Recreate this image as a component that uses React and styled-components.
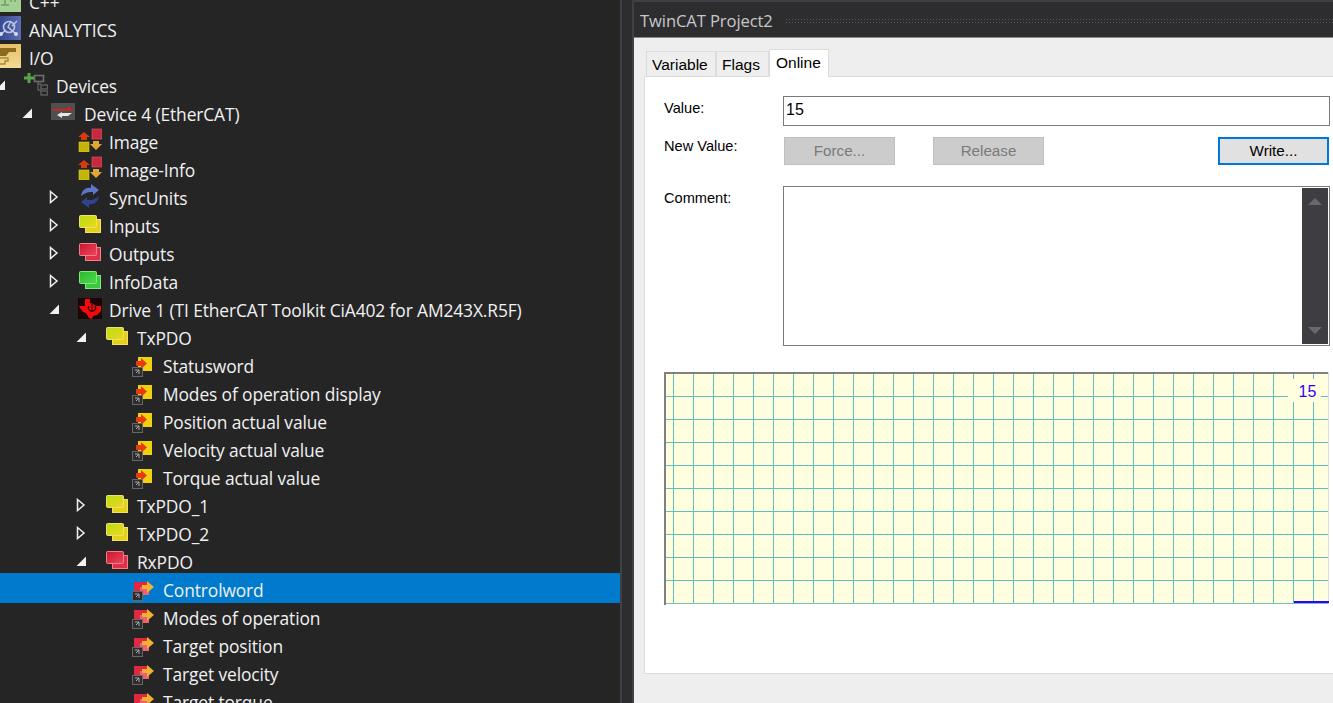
import React, { useId } from 'react'
import styled, { createGlobalStyle } from 'styled-components'

const GlobalStyle = createGlobalStyle`
  html, body {
    margin: 0;
    height: 100%;
    overflow: hidden;
    background: #252526;
  }
`

// icons

const CppIcon = () => (
  <svg width="24" height="24" viewBox="0 0 24 24">
    <rect width="24" height="24" fill="#a5d095" />
    <path d="M4 5h8M8 5v12M4 11h14M14 8v6M18 8v6M4 17h8" stroke="#6f9f66" strokeWidth="1.5" fill="none" />
  </svg>
)

const AnalyticsIcon = () => {
  const id = useId()
  return (
    <svg width="24" height="24" viewBox="0 0 24 24">
      <defs>
        <linearGradient id={id} x1="0" y1="0" x2="1" y2="0">
          <stop offset="0" stopColor="#35458c" />
          <stop offset="1" stopColor="#5a6cb4" />
        </linearGradient>
      </defs>
      <rect width="24" height="24" fill={`url(#${id})`} />
      <circle cx="12" cy="11" r="5.500" fill="none" stroke="#c0c8dc" strokeWidth="1.600" />
      <path d="M3 19l6-5M14 5l-3 6 9 8M20 5l-5 5" stroke="#c0c8dc" strokeWidth="1.400" fill="none" />
      <circle cx="4" cy="18" r="2" fill="#d5dae8" />
      <circle cx="19" cy="18" r="2" fill="#d5dae8" />
    </svg>
  )
}

const IoIcon = () => {
  const id = useId()
  return (
    <svg width="24" height="24" viewBox="0 0 24 24">
      <defs>
        <linearGradient id={id} x1="0" y1="0" x2="0" y2="1">
          <stop offset="0" stopColor="#e6c06a" />
          <stop offset="1" stopColor="#f2dc95" />
        </linearGradient>
      </defs>
      <rect width="24" height="24" fill={`url(#${id})`} />
      <path d="M1 4h18v4H12L9 12H1z" fill="#8a6a1e" />
      <path d="M1 14h10v3h-3v3H1z" fill="none" stroke="#a88a3a" strokeWidth="1.400" />
    </svg>
  )
}

const DevicesIcon = () => (
  <svg width="24" height="24" viewBox="0 0 24 24">
    <path d="M14 9v9h3M14 12h3" stroke="#5d5d5d" strokeWidth="1.300" fill="none" />
    <rect x="10.500" y="3.500" width="9" height="6" fill="none" stroke="#6e6e6e" strokeWidth="1.600" />
    <rect x="17" y="13" width="6.500" height="4" fill="none" stroke="#5f5f5f" strokeWidth="1.400" />
    <rect x="17" y="19" width="6.500" height="4" fill="none" stroke="#5f5f5f" strokeWidth="1.400" />
    <path d="M3.500 1h3v3.500H10v3H6.500V11h-3V7.500H0v-3h3.500z" fill="#57a64a" />
  </svg>
)

const DeviceIcon = () => (
  <svg width="24" height="18" viewBox="0 0 24 18">
    <rect width="24" height="17" fill="#4f4f4f" />
    <path d="M2 6h15V3l5 4.500H2z" fill="#f01818" />
    <path d="M21 10H11v-1l-5 3 5 3v-2h6z" fill="#e8e8e8" />
  </svg>
)

const ImageIcon = () => (
  <svg width="24" height="24" viewBox="0 0 24 24">
    <path d="M0 9l6-5 6 5H9v3H3V9z" fill="#d83a10" />
    <rect x="14" y="1" width="10" height="10" fill="#c8283e" stroke="#e25a6a" strokeWidth="0.600" />
    <rect x="1" y="14" width="10" height="10" fill="#c4b508" stroke="#e0d030" strokeWidth="0.600" />
    <path d="M15 13h6v3h3l-6 6-6-6h3z" fill="#e0a830" />
  </svg>
)

const SyncIcon = () => (
  <svg width="24" height="24" viewBox="-3 0 24 24">
    <path d="M0 12C1 6 5 3 10 4V0l8 6-6 5V8C8 7.500 4 8.500 0 12z" fill="#5f75c8" />
    <path d="M18 12c-1 6-5 9-10 8v4l-8-6 6-5v3c4 .5 8-.5 12-4z" fill="#2f4390" />
  </svg>
)

const stackColors = {
  yellow: { from: '#b8dc10', to: '#ecd820', edge: '#f0e070', front: '#e6d214' },
  red: { from: '#d0142c', to: '#e8485c', edge: '#f08090', front: '#e03048' },
  green: { from: '#2cb82c', to: '#50d850', edge: '#80e880', front: '#3cc83c' },
}

const StackIcon = ({ color }) => {
  const id = useId()
  const c = stackColors[color]
  return (
    <svg width="23" height="18" viewBox="-1 0 23 18">
      <defs>
        <linearGradient id={id} x1="0" y1="0" x2="1" y2="1">
          <stop offset="0" stopColor={c.from} />
          <stop offset="1" stopColor={c.to} />
        </linearGradient>
      </defs>
      <rect x="6.500" y="4.500" width="15" height="13" fill={c.front} stroke={c.edge} />
      <rect x="0.500" y="0.500" width="17" height="12" rx="1" fill={`url(#${id})`} stroke={c.edge} />
    </svg>
  )
}

const DriveIcon = () => (
  <svg width="24" height="21" viewBox="0 0 24 21">
    <rect width="24" height="21" fill="#1c0606" />
    <path d="M1 8h6V1h5v4l3 1 3 2h5v5l-4 4-4 1-1 3-3-1-3-5-3-1-3-4z" fill="#f00c0c" />
    <path d="M14 6v8M11 8a3.500 3.500 0 1 0 6 0" stroke="#4a0404" strokeWidth="1.300" fill="none" />
  </svg>
)

const LinkOverlay = () => (
  <>
    <rect x="0.500" y="10.500" width="10" height="9" fill="#2d2d2d" stroke="#666" />
    <path d="M3 13h4v4M7 13l-3 3" stroke="#aaa" strokeWidth="1" fill="none" />
  </>
)

const InVarIcon = () => (
  <svg width="20" height="20" viewBox="0 0 20 20">
    <rect x="6" y="0" width="14" height="14" fill="#f0d010" />
    <path d="M4 4h5V1l6 5.500L9 12V9H4z" fill="#e83a10" />
    <LinkOverlay />
  </svg>
)

const OutVarIcon = () => (
  <svg width="24" height="20" viewBox="0 0 24 20">
    <rect x="2" y="1" width="15" height="13" fill="#e02840" />
    <rect x="8" y="6" width="9" height="8" fill="#f06070" />
    <path d="M10 4h5V0l7 6-7 6V8h-5z" fill="#f0b030" />
    <LinkOverlay />
  </svg>
)

const icons = {
  cpp: <CppIcon />,
  analytics: <AnalyticsIcon />,
  io: <IoIcon />,
  devices: <DevicesIcon />,
  device: <DeviceIcon />,
  image: <ImageIcon />,
  sync: <SyncIcon />,
  yellow: <StackIcon color="yellow" />,
  red: <StackIcon color="red" />,
  green: <StackIcon color="green" />,
  drive: <DriveIcon />,
  invar: <InVarIcon />,
  outvar: <OutVarIcon />,
}

const OpenArrow = () => (
  <svg width="10" height="10" viewBox="0 0 10 10">
    <path d="M10 0.500V10H0.500z" fill="#f1f1f1" />
  </svg>
)

const ClosedArrow = () => (
  <svg width="10" height="14" viewBox="0 0 10 14">
    <path d="M1.500 1.500L8 7l-6.500 5.500z" fill="none" stroke="#f1f1f1" strokeWidth="1.500" />
  </svg>
)

const tree = [
  { label: 'C++', level: 0, icon: 'cpp' },
  { label: 'ANALYTICS', level: 0, icon: 'analytics' },
  { label: 'I/O', level: 0, icon: 'io' },
  { label: 'Devices', level: 1, icon: 'devices', arrow: 'open' },
  { label: 'Device 4 (EtherCAT)', level: 2, icon: 'device', arrow: 'open' },
  { label: 'Image', level: 3, icon: 'image' },
  { label: 'Image-Info', level: 3, icon: 'image' },
  { label: 'SyncUnits', level: 3, icon: 'sync', arrow: 'closed' },
  { label: 'Inputs', level: 3, icon: 'yellow', arrow: 'closed' },
  { label: 'Outputs', level: 3, icon: 'red', arrow: 'closed' },
  { label: 'InfoData', level: 3, icon: 'green', arrow: 'closed' },
  { label: 'Drive 1 (TI EtherCAT Toolkit CiA402 for AM243X.R5F)', level: 3, icon: 'drive', arrow: 'open' },
  { label: 'TxPDO', level: 4, icon: 'yellow', arrow: 'open' },
  { label: 'Statusword', level: 5, icon: 'invar' },
  { label: 'Modes of operation display', level: 5, icon: 'invar' },
  { label: 'Position actual value', level: 5, icon: 'invar' },
  { label: 'Velocity actual value', level: 5, icon: 'invar' },
  { label: 'Torque actual value', level: 5, icon: 'invar' },
  { label: 'TxPDO_1', level: 4, icon: 'yellow', arrow: 'closed' },
  { label: 'TxPDO_2', level: 4, icon: 'yellow', arrow: 'closed' },
  { label: 'RxPDO', level: 4, icon: 'red', arrow: 'open' },
  { label: 'Controlword', level: 5, icon: 'outvar', selected: true },
  { label: 'Modes of operation', level: 5, icon: 'outvar' },
  { label: 'Target position', level: 5, icon: 'outvar' },
  { label: 'Target velocity', level: 5, icon: 'outvar' },
  { label: 'Target torque', level: 5, icon: 'outvar' },
]

// distance from icon to label differs a pixel between levels in the picture
const labelOffset = [32, 32, 33, 31, 32, 31]

const Page = styled.div`
  display: flex;
  width: 1333px;
  height: 703px;
  overflow: hidden;
`

const TreePanel = styled.div`
  flex: 0 0 620px;
  height: 703px;
  overflow: hidden;
  background: #252526;
`

const TreeList = styled.div`
  margin-top: -14px;
`

const Row = styled.div`
  display: flex;
  align-items: center;
  height: 28px;
  background: ${props => (props.$selected ? '#007acc' : 'transparent')};
  box-shadow: ${props => (props.$selected ? '0 -1px 0 #007acc, 0 1px 0 #007acc' : 'none')};
`

const Expander = styled.div`
  flex: 0 0 29px;
  display: flex;
  align-items: center;
  height: 28px;
  padding-top: 2px;
  box-sizing: border-box;
  margin-left: ${props => props.$level * 27 - 32}px;
`

const IconSlot = styled.div`
  flex: 0 0 ${props => props.$width}px;
  display: flex;
  align-items: center;
  box-sizing: border-box;
  height: 28px;
  padding-top: ${props => (props.$low ? 5 : 0)}px;
`

const Label = styled.span`
  font-family: "Open Sans", "Noto Sans", sans-serif;
  font-size: 17.4px;
  letter-spacing: -0.12px;
  line-height: 28px;
  padding-top: 3px;
  color: #f1f1f1;
  white-space: nowrap;
`

const Splitter = styled.div`
  flex: 0 0 14px;
  height: 703px;
  background: #2d2d30;
  border-left: 2px solid #3f3f46;
  border-right: 2px solid #3f3f46;
  box-sizing: border-box;
`

const Window = styled.div`
  flex: 1;
  min-width: 0;
  display: flex;
  flex-direction: column;
  background: #eeeeee;
  font-family: "Liberation Sans", Arial, sans-serif;
`

const TitleBar = styled.div`
  flex: 0 0 38px;
  box-sizing: border-box;
  display: flex;
  align-items: center;
  gap: 12px;
  background: #2d2d30;
  border-top: 2px solid #3f3f46;
  border-bottom: 1px solid #8a8a8a;
  padding: 2px 0 0 6px;
`

const TitleText = styled.span`
  font-family: "Open Sans", "Noto Sans", sans-serif;
  font-size: 16.6px;
  letter-spacing: -0.1px;
  color: #c8c8c8;
  white-space: nowrap;
`

const Grip = styled.div`
  flex: 1;
  height: 6px;
  background-image: radial-gradient(#55555a 1px, transparent 1px);
  background-size: 3px 3px;
`

const WindowBody = styled.div`
  flex: 1;
  display: flex;
  flex-direction: column;
  padding: 11px 0 29px 10px;
  min-height: 0;
`

const TabStrip = styled.div`
  display: flex;
  align-items: flex-end;
  height: 28px;
  padding-left: 2px;
  position: relative;
  z-index: 1;
  margin-bottom: -1px;
`

const Tab = styled.div`
  box-sizing: border-box;
  width: ${props => props.$width}px;
  height: ${props => (props.$active ? 28 : 26)}px;
  background: ${props => (props.$active ? '#ffffff' : '#eeeeee')};
  border: 1px solid #dcdcdc;
  border-bottom: ${props => (props.$active ? 'none' : '1px solid #dcdcdc')};
  font-size: 15.5px;
  color: #000;
  padding: ${props => (props.$active ? '4px 0 0 6px' : '4px 0 0 5px')};
  line-height: 18px;
`

const TabPage = styled.div`
  flex: 1;
  background: #ffffff;
  border: 1px solid #dcdcdc;
  border-right: none;
  padding: 19px 0 0 19px;
`

const FormGrid = styled.div`
  display: grid;
  grid-template-columns: 119px 547px;
  grid-template-rows: 30px 38px 160px;
  row-gap: 11px;
`

const FieldLabel = styled.div`
  font-size: 14.6px;
  color: #000;
  padding-top: ${props => props.$top}px;
`

const TextBox = styled.div`
  box-sizing: border-box;
  border: 1px solid #7a7a7a;
  background: #fff;
  font-size: 16px;
  color: #000;
  padding: 4px 0 0 2px;
`

const ButtonRow = styled.div`
  display: flex;
  align-items: flex-start;
  padding-left: 1px;
  width: 545px;
`

const FormButton = styled.div`
  box-sizing: border-box;
  width: 111px;
  height: 28px;
  padding-bottom: 2px;
  margin-right: ${props => props.$gap || 0}px;
  margin-left: ${props => (props.$pushRight ? 'auto' : '0')};
  background: ${props => (props.$primary ? '#e1e1e1' : '#cccccc')};
  border: ${props => (props.$primary ? '2px solid #0078d7' : '1px solid #bfbfbf')};
  color: ${props => (props.$primary ? '#000' : '#7a7a7a')};
  font-size: 15.2px;
  display: flex;
  align-items: center;
  justify-content: center;
`

const CommentBox = styled.div`
  box-sizing: border-box;
  border: 1px solid #7a7a7a;
  background: #fff;
  display: flex;
  justify-content: flex-end;
  padding: 1px;
`

const ScrollBar = styled.div`
  width: 26px;
  background: #3e3e42;
  display: flex;
  flex-direction: column;
  justify-content: space-between;
  align-items: center;
  padding: 10px 0;
`

const ScrollArrow = styled.svg`
  display: block;
`

const ChartWrap = styled.div`
  position: relative;
  width: 665px;
  height: 233px;
  margin-top: 26px;
`

const Chart = styled.svg`
  display: block;
`

const ChartValue = styled.div`
  position: absolute;
  left: 624px;
  top: 7px;
  width: 33px;
  height: 23px;
  background: #ffffe0;
  color: #3300ff;
  font-size: 16px;
  line-height: 25px;
  text-align: center;
  padding-left: 6px;
  box-sizing: border-box;
`

const verticals = Array.from({ length: 33 }, (_, i) => 9.5 + i * 20)
const horizontals = Array.from({ length: 9 }, (_, i) => 24.5 + i * 23)
const lowIcons = ['invar', 'outvar']

const App = () => (
  <>
    <GlobalStyle />
    <Page>
      <TreePanel>
        <TreeList>
          {tree.map(row => (
            <Row key={row.label} $selected={row.selected}>
              <Expander $level={row.level}>
                {row.arrow === 'open' && <OpenArrow />}
                {row.arrow === 'closed' && <ClosedArrow />}
              </Expander>
              <IconSlot $width={labelOffset[row.level]} $low={lowIcons.includes(row.icon)}>
                {icons[row.icon]}
              </IconSlot>
              <Label>{row.label}</Label>
            </Row>
          ))}
        </TreeList>
      </TreePanel>
      <Splitter />
      <Window>
        <TitleBar>
          <TitleText>TwinCAT Project2</TitleText>
          <Grip />
        </TitleBar>
        <WindowBody>
          <TabStrip>
            <Tab $width={70}>Variable</Tab>
            <Tab $width={53}>Flags</Tab>
            <Tab $width={60} $active>Online</Tab>
          </TabStrip>
          <TabPage>
            <FormGrid>
              <FieldLabel $top={4}>Value:</FieldLabel>
              <TextBox>15</TextBox>
              <FieldLabel $top={1}>New Value:</FieldLabel>
              <ButtonRow>
                <FormButton $gap={38}>Force...</FormButton>
                <FormButton>Release</FormButton>
                <FormButton $primary $pushRight>Write...</FormButton>
              </ButtonRow>
              <FieldLabel $top={4}>Comment:</FieldLabel>
              <CommentBox>
                <ScrollBar>
                  <ScrollArrow width="14" height="7" viewBox="0 0 14 7">
                    <path d="M7 0l7 7H0z" fill="#68686e" />
                  </ScrollArrow>
                  <ScrollArrow width="14" height="7" viewBox="0 0 14 7">
                    <path d="M7 7L0 0h14z" fill="#68686e" />
                  </ScrollArrow>
                </ScrollBar>
              </CommentBox>
            </FormGrid>
            <ChartWrap>
              <Chart width="665" height="233" viewBox="0 0 665 233">
                <rect x="0" y="0" width="664" height="232" fill="#ffffe0" />
                {verticals.map(x => (
                  <line key={x} x1={x} x2={x} y1="1" y2="232" stroke="#5fc0c0" />
                ))}
                {horizontals.map(y => (
                  <line key={y} x1="1" x2="664" y1={y} y2={y} stroke="#5fc0c0" />
                ))}
                <path d="M0 1H664" stroke="#808080" strokeWidth="2" />
                <path d="M1 0V234" stroke="#808080" strokeWidth="2" />
                <path d="M2 231.500H664" stroke="#70c0c0" />
                <path d="M664.500 0V233" stroke="#dcdcdc" />
                <rect x="630" y="229" width="35" height="2" fill="#3300ff" />
              </Chart>
              <ChartValue>15</ChartValue>
            </ChartWrap>
          </TabPage>
        </WindowBody>
      </Window>
    </Page>
  </>
)

export default App
